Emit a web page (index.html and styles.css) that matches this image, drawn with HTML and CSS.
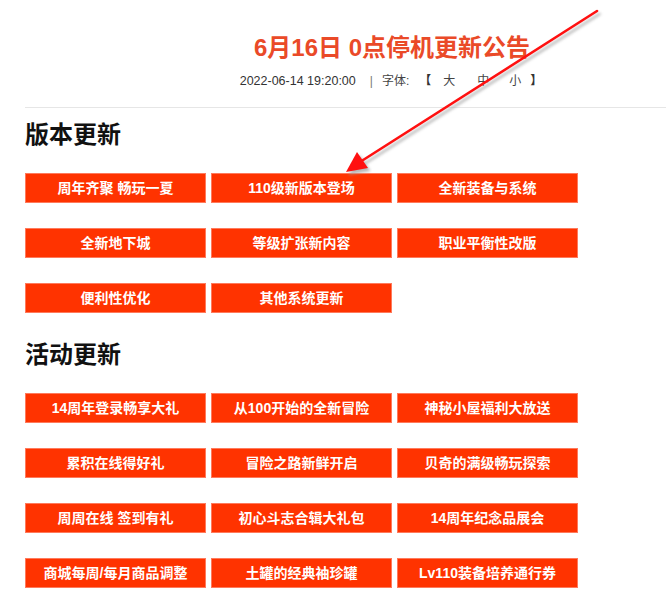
FILE: index.html
```html
<!DOCTYPE html>
<html lang="zh-CN">
<head>
<meta charset="utf-8">
<title>6月16日 0点停机更新公告</title>
<link rel="stylesheet" href="styles.css">
</head>
<body>
<div class="page">
  <header class="head">
    <h1 class="title">6月16日 0点停机更新公告</h1>
    <div class="meta">
      <span class="date">2022-06-14 19:20:00</span>
      <span class="sep">|</span>
      <span class="lbl">字体:</span>
      <span class="br br-open">【</span>
      <span class="sz sz-l">大</span>
      <span class="sz sz-m">中</span>
      <span class="sz sz-s">小</span>
      <span class="br br-close">】</span>
    </div>
  </header>
  <hr class="rule">
  <section class="sec">
    <h2 class="sec-title">版本更新</h2>
    <div class="grid">
      <a class="btn">周年齐聚 畅玩一夏</a>
      <a class="btn">110级新版本登场</a>
      <a class="btn">全新装备与系统</a>
      <a class="btn">全新地下城</a>
      <a class="btn">等级扩张新内容</a>
      <a class="btn">职业平衡性改版</a>
      <a class="btn">便利性优化</a>
      <a class="btn">其他系统更新</a>
    </div>
  </section>
  <section class="sec">
    <h2 class="sec-title">活动更新</h2>
    <div class="grid">
      <a class="btn">14周年登录畅享大礼</a>
      <a class="btn">从100开始的全新冒险</a>
      <a class="btn">神秘小屋福利大放送</a>
      <a class="btn">累积在线得好礼</a>
      <a class="btn">冒险之路新鲜开启</a>
      <a class="btn">贝奇的满级畅玩探索</a>
      <a class="btn">周周在线 签到有礼</a>
      <a class="btn">初心斗志合辑大礼包</a>
      <a class="btn">14周年纪念品展会</a>
      <a class="btn">商城每周/每月商品调整</a>
      <a class="btn">土罐的经典袖珍罐</a>
      <a class="btn">Lv110装备培养通行券</a>
    </div>
  </section>
  <svg class="arrow" width="666" height="200" viewBox="0 0 666 200">
    <defs>
      <filter id="sh" x="-10%" y="-10%" width="130%" height="130%">
        <feGaussianBlur stdDeviation="1.5"/>
      </filter>
    </defs>
    <g transform="translate(2.5,3)" filter="url(#sh)" fill="#9a9a9a" stroke="#9a9a9a" opacity="0.7">
      <line x1="597" y1="11" x2="360" y2="162" stroke-width="2.5" stroke-linecap="round"/>
      <polygon points="346,172 357,152 368,168" stroke="none"/>
    </g>
    <g fill="#ff1010" stroke="#ff1010">
      <line x1="597" y1="11" x2="360" y2="162" stroke-width="2.6" stroke-linecap="round"/>
      <polygon points="346,172 357,152 368,168" stroke="none"/>
    </g>
  </svg>
</div>
</body>
</html>
```
FILE: styles.css
```css
html, body {
  margin: 0;
  padding: 0;
  background: #fff;
  overflow: hidden;
}
body {
  font-family: "Noto Sans CJK SC", sans-serif;
  color: #222;
}
.page {
  position: relative;
  width: 666px;
  height: 599px;
  overflow: hidden;
}
.head {
  padding: 33px 0 0 118px;
  text-align: center;
}
.title {
  margin: 0;
  font-size: 24px;
  line-height: 30px;
  font-weight: bold;
  color: #ea4a28;
  font-family: "Liberation Sans", "Noto Sans CJK SC", sans-serif;
  white-space: nowrap;
}
.meta {
  margin-top: 8px;
  height: 20px;
  line-height: 20px;
  font-size: 12px;
  color: #444;
  font-family: "Liberation Sans", "Noto Sans CJK SC", sans-serif;
  display: flex;
  justify-content: center;
  margin-left: -2px;
  white-space: nowrap;
}
.date { font-size: 12.5px; color: #333; }
.sep { margin-left: 14px; color: #777; }
.lbl { margin-left: 9px; }
.br { color: #333; font-weight: bold; }
.br-open { margin-left: 10px; }
.sz-l { margin-left: 12px; }
.sz-m { margin-left: 22px; }
.sz-s { margin-left: 20px; }
.br-close { margin-left: 9px; }
.rule {
  margin: 16px 0 0 25px;
  border: 0;
  height: 1px;
  background: #e6e6e6;
  width: 641px;
}
.sec {
  padding-left: 25px;
}
.sec-title {
  margin: 10px 0 25px;
  font-size: 24px;
  line-height: 30px;
  font-weight: bold;
  color: #111;
}
.sec + .sec .sec-title {
  margin-top: 25px;
}
.grid {
  display: grid;
  grid-template-columns: repeat(3, 181px);
  column-gap: 5px;
  row-gap: 25px;
}
.btn {
  display: block;
  height: 28px;
  line-height: 28px;
  border: 1px solid #ff7a5c;
  background: #ff3300;
  color: #fff;
  font-size: 14px;
  font-weight: bold;
  text-align: center;
  white-space: nowrap;
  font-family: "Liberation Sans", "Noto Sans CJK SC", sans-serif;
}
.arrow {
  position: absolute;
  left: 0;
  top: 0;
  pointer-events: none;
}
```
